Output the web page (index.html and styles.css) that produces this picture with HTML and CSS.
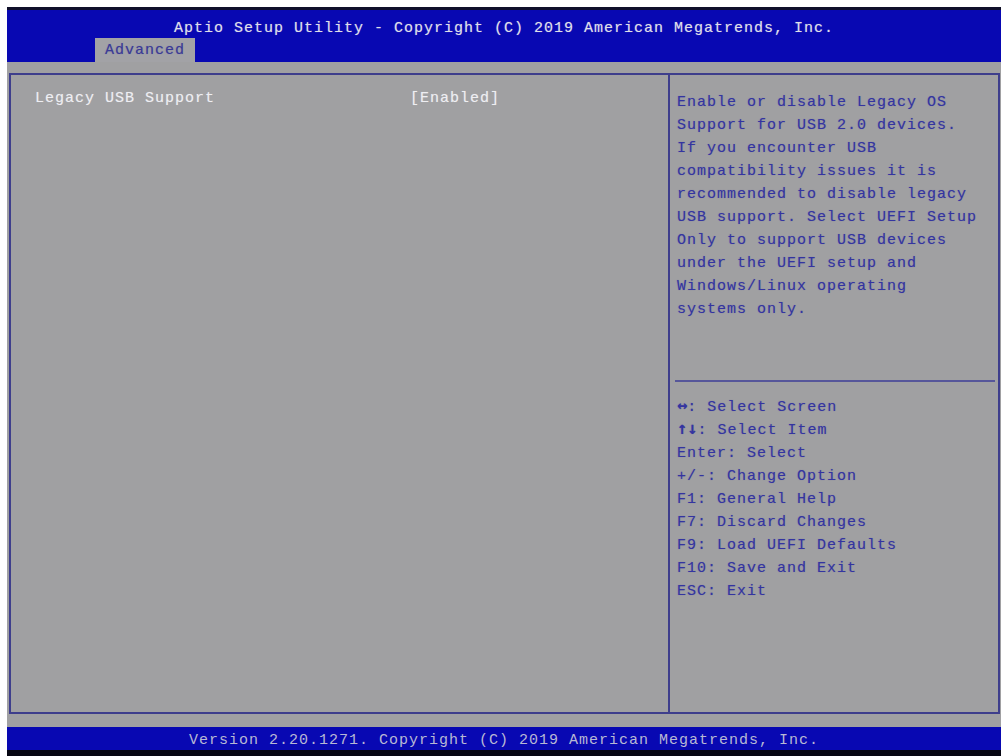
FILE: index.html
```
<!DOCTYPE html>
<html lang="en">
<head>
<meta charset="UTF-8">
<link rel="stylesheet" href="styles.css">
<title>Aptio Setup Utility</title>
</head>
<body>
<div class="screen">
  <div class="header">
    <div class="title">Aptio Setup Utility - Copyright (C) 2019 American Megatrends, Inc.</div>
    <div class="tabs"><span class="tab">Advanced</span></div>
  </div>
  <div class="main">
    <div class="frame">
      <div class="items">
        <div class="item"><span class="label">Legacy USB Support</span><span class="value">[Enabled]</span></div>
      </div>
      <div class="side">
        <div class="help">Enable or disable Legacy OS<br>Support for USB 2.0 devices.<br>If you encounter USB<br>compatibility issues it is<br>recommended to disable legacy<br>USB support. Select UEFI Setup<br>Only to support USB devices<br>under the UEFI setup and<br>Windows/Linux operating<br>systems only.</div>
        <div class="sep"></div>
        <div class="keys">
          <div><b class="arr">&#8596;</b>: Select Screen</div>
          <div><b class="arr">&#8593;&#8595;</b>: Select Item</div>
          <div>Enter: Select</div>
          <div>+/-: Change Option</div>
          <div>F1: General Help</div>
          <div>F7: Discard Changes</div>
          <div>F9: Load UEFI Defaults</div>
          <div>F10: Save and Exit</div>
          <div>ESC: Exit</div>
        </div>
      </div>
    </div>
  </div>
  <div class="footer">Version 2.20.1271. Copyright (C) 2019 American Megatrends, Inc.</div>
</div>
</body>
</html>
```

FILE: styles.css
```
body        {margin:0;padding:0;background:#fff;}
.screen     {margin:7px 2px 0 7px;height:749px;display:flex;flex-direction:column;
             font:15px "Liberation Mono","DejaVu Sans Mono",monospace;letter-spacing:1px;}
.header     {height:52px;background:#0808b2;border-top:3px solid #10102a;display:flex;flex-direction:column;}
.title      {color:#dedeea;text-align:center;height:28px;line-height:38px;text-shadow:0 0 1px rgba(222,222,234,.5);}
.tabs       {padding-left:88px;display:flex;align-items:flex-end;flex:1;}
.tab        {background:#a2a2a6;color:#3a3a96;width:100px;height:24px;line-height:26px;text-indent:10px;text-shadow:0 0 1px rgba(58,58,150,.4);}
.main       {flex:1;background:#a0a0a2;padding:11px 1px 13px 2px;display:flex;}
.frame      {flex:1;border:2px solid #3e3e8c;display:grid;grid-template-columns:659px 1fr;}
.items      {border-right:2px solid #3e3e8c;padding:12px 0 0 24px;}
.item       {display:flex;color:#eeeef2;line-height:23px;text-shadow:0 0 1px rgba(238,238,242,.4);}
.label      {width:375px;}
.side       {padding:16px 3px 0 5px;color:#3434a0;line-height:23px;text-shadow:0 0 1px rgba(52,52,160,.4);}
.help       {height:289px;padding-left:2px;}
.sep        {border-top:2px solid #56569a;margin:0 0 14px 0;}
.keys       {padding-left:2px;}
.arr        {font-family:"DejaVu Sans Mono",monospace;font-size:17px;line-height:10px;letter-spacing:0;}
.footer     {height:23px;line-height:27px;background:#0808b2;color:#b8b8d4;text-align:center;border-bottom:6px solid #060612;}
```
